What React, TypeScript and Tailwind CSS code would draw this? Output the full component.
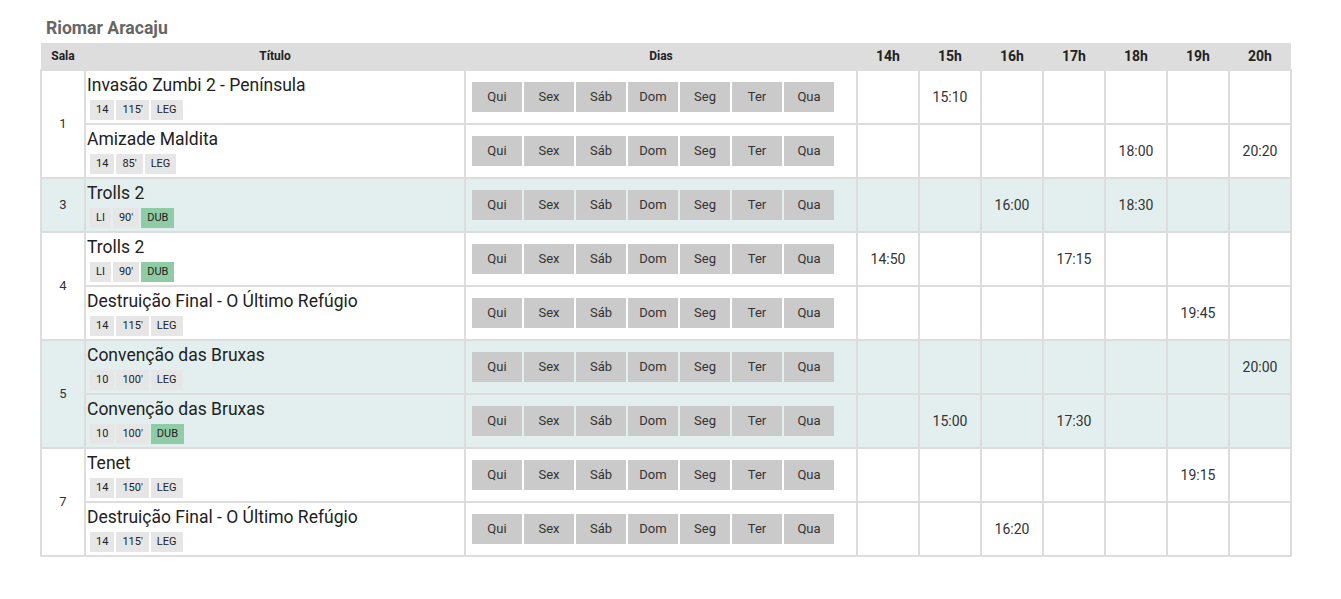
const days = ["Qui", "Sex", "Sáb", "Dom", "Seg", "Ter", "Qua"];
const hours = ["14h", "15h", "16h", "17h", "18h", "19h", "20h"];

type Movie = {
  title: string;
  age: string;
  len: string;
  lang: "LEG" | "DUB";
  times: Record<string, string>;
};

type Sala = { sala: string; shade: boolean; movies: Movie[] };

const salas: Sala[] = [
  {
    sala: "1",
    shade: false,
    movies: [
      { title: "Invasão Zumbi 2 - Península", age: "14", len: "115'", lang: "LEG", times: { "15h": "15:10" } },
      { title: "Amizade Maldita", age: "14", len: "85'", lang: "LEG", times: { "18h": "18:00", "20h": "20:20" } },
    ],
  },
  {
    sala: "3",
    shade: true,
    movies: [{ title: "Trolls 2", age: "LI", len: "90'", lang: "DUB", times: { "16h": "16:00", "18h": "18:30" } }],
  },
  {
    sala: "4",
    shade: false,
    movies: [
      { title: "Trolls 2", age: "LI", len: "90'", lang: "DUB", times: { "14h": "14:50", "17h": "17:15" } },
      { title: "Destruição Final - O Último Refúgio", age: "14", len: "115'", lang: "LEG", times: { "19h": "19:45" } },
    ],
  },
  {
    sala: "5",
    shade: true,
    movies: [
      { title: "Convenção das Bruxas", age: "10", len: "100'", lang: "LEG", times: { "20h": "20:00" } },
      { title: "Convenção das Bruxas", age: "10", len: "100'", lang: "DUB", times: { "15h": "15:00", "17h": "17:30" } },
    ],
  },
  {
    sala: "7",
    shade: false,
    movies: [
      { title: "Tenet", age: "14", len: "150'", lang: "LEG", times: { "19h": "19:15" } },
      { title: "Destruição Final - O Último Refúgio", age: "14", len: "115'", lang: "LEG", times: { "16h": "16:20" } },
    ],
  },
];

function Badge({ text, green }: { text: string; green?: boolean }) {
  return (
    <span
      className={
        "inline-flex h-[20px] items-center px-[6px] text-[11px] text-[#222] " +
        (green ? "bg-[#8fcca5]" : "bg-[#e6e6e6]")
      }
    >
      {text}
    </span>
  );
}

export default function App() {
  return (
    <div className="w-[1341px] h-[599px] bg-white pl-[40px] pt-[16px] font-['Roboto','Liberation_Sans',sans-serif]">
      <h2 className="pl-[6px] text-[17.6px] font-bold leading-[24px] text-[#666] mb-[3px]">Riomar Aracaju</h2>
      <table className="table-fixed border-collapse w-[1252px]">
        <colgroup>
          <col className="w-[44px]" />
          <col className="w-[380px]" />
          <col className="w-[392px]" />
          {hours.map((h) => (
            <col key={h} className="w-[62px]" />
          ))}
        </colgroup>
        <thead>
          <tr className="h-[27px] bg-[#dddddd] text-[#222]">
            <th className="text-[12px] font-bold">Sala</th>
            <th className="text-[12px] font-bold">Título</th>
            <th className="text-[12px] font-bold">Dias</th>
            {hours.map((h) => (
              <th key={h} className="text-[14px] font-bold">
                {h}
              </th>
            ))}
          </tr>
        </thead>
        <tbody>
          {salas.map((s) =>
            s.movies.map((m, i) => (
              <tr key={s.sala + i} className={"h-[54px] " + (s.shade ? "bg-[#e2efee]" : "bg-white")}>
                {i === 0 && (
                  <td rowSpan={s.movies.length} className="border-2 border-[#dddddd] text-center text-[13px] text-[#333]">
                    {s.sala}
                  </td>
                )}
                <td className="border-2 border-[#dddddd] pl-[1px] pr-2 align-top">
                  <div className="text-[17.5px] font-normal leading-[20px] text-[#222] mt-[4px]">{m.title}</div>
                  <div className="flex gap-[2px] mt-[5px] pl-[3px]">
                    <Badge text={m.age} />
                    <Badge text={m.len} />
                    <Badge text={m.lang} green={m.lang === "DUB"} />
                  </div>
                </td>
                <td className="border-2 border-[#dddddd] pl-[6px]">
                  <div className="flex gap-[2px]">
                    {days.map((d) => (
                      <span
                        key={d}
                        className="flex h-[30px] w-[50px] items-center justify-center bg-[#cacaca] text-[13px] text-[#333]"
                      >
                        {d}
                      </span>
                    ))}
                  </div>
                </td>
                {hours.map((h) => (
                  <td key={h} className="border-2 border-[#dddddd] text-center text-[14px] text-[#333]">
                    {m.times[h] ?? ""}
                  </td>
                ))}
              </tr>
            ))
          )}
        </tbody>
      </table>
    </div>
  );
}
